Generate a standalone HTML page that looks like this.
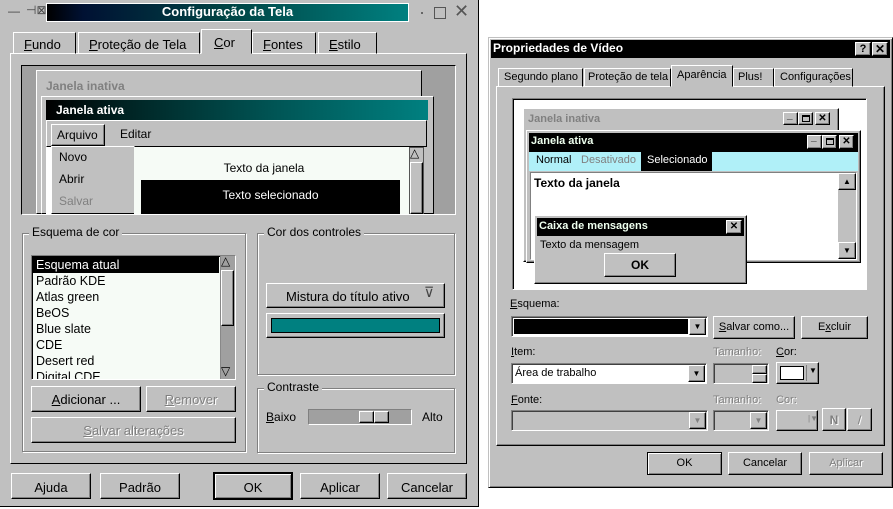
<!DOCTYPE html><html><head><meta charset="utf-8"><style>
*{box-sizing:border-box;margin:0;padding:0}
body{width:893px;height:509px;background:#fff;position:relative;overflow:hidden;font-family:"Liberation Sans",sans-serif;font-size:12px;color:#000}
div,span{position:absolute}
.r{background:#c0c0c0;border:1px solid;border-color:#fff #000 #000 #fff;box-shadow:inset -1px -1px #808080}
.s{border:1px solid;border-color:#808080 #fff #fff #808080;box-shadow:inset 1px 1px #404040}
.g{border:1px solid #808080;box-shadow:1px 1px #fff,inset 1px 1px #fff}
.t{white-space:nowrap}
.c{text-align:center}
.gl{background:#c0c0c0;padding:0 3px;white-space:nowrap}
.dis{color:#808080;text-shadow:1px 1px #fff}
.w{font-size:11px}
</style></head><body>
<!-- LEFT DIALOG -->
<div style="left:0;top:0;width:479px;height:507px;background:#c0c0c0;border-right:1px solid #000;border-bottom:1px solid #000"></div>
<div class="t" style="left:8px;top:4px;font-size:12px;color:#444">—</div>
<div class="t" style="left:26px;top:3px;font-size:12px;color:#444">⊣⊠</div>
<div style="left:46px;top:3px;width:363px;height:19px;background:linear-gradient(90deg,#000 0%,#013 10%,#044 50%,#008080 100%);border:1px solid #fff"></div>
<div class="t c" style="left:46px;top:4px;width:363px;color:#fff;font-weight:bold;font-size:13px">Configuração da Tela</div>
<div style="left:421px;top:12px;width:2px;height:2px;background:#666"></div>
<div style="left:434px;top:7px;width:12px;height:12px;border:1px solid #555"></div>
<div class="t" style="left:454px;top:1px;font-size:18px;color:#555">✕</div>
<!-- tabs -->
<div style="left:10px;top:53px;width:457px;height:411px;border:1px solid;border-color:#fff #000 #000 #fff"></div>
<div class="t" style="left:13px;top:32px;width:63px;height:22px;border:1px solid;border-color:#fff #000 transparent #fff;padding:4px 0 0 10px;font-size:13px"><u>F</u>undo</div>
<div class="t" style="left:78px;top:32px;width:122px;height:22px;border:1px solid;border-color:#fff #000 transparent #fff;padding:4px 0 0 10px;font-size:13px"><u>P</u>roteção de Tela</div>
<div class="t" style="left:201px;top:29px;width:51px;height:25px;border:1px solid;border-color:#fff #000 transparent #fff;background:#c0c0c0;padding:5px 0 0 12px;font-size:13px"><u>C</u>or</div>
<div class="t" style="left:252px;top:32px;width:64px;height:22px;border:1px solid;border-color:#fff #000 transparent #fff;padding:4px 0 0 10px;font-size:13px"><u>F</u>ontes</div>
<div class="t" style="left:318px;top:32px;width:59px;height:22px;border:1px solid;border-color:#fff #000 transparent #fff;padding:4px 0 0 10px;font-size:13px"><u>E</u>stilo</div>
<!-- preview -->
<div style="left:21px;top:65px;width:435px;height:150px;background:#a0a0a0;border:1px solid;border-color:#000 #fff #fff #000"></div>
<div style="left:36px;top:70px;width:386px;height:144px;background:#c0c0c0;border:1px solid;border-color:#fff #000 #000 #fff"></div>
<div class="t" style="left:46px;top:79px;color:#808080;font-weight:bold;font-size:12px">Janela inativa</div>
<div style="left:41px;top:96px;width:393px;height:118px;background:#c0c0c0;border:1px solid;border-color:#fff #000 #000 #fff"></div>
<div style="left:46px;top:100px;width:382px;height:20px;background:linear-gradient(90deg,#000 0%,#022 20%,#055 60%,#008080 100%)"></div>
<div class="t" style="left:56px;top:103px;color:#fff;font-weight:bold;font-size:12px">Janela ativa</div>
<div style="left:46px;top:120px;width:381px;height:27px;border:1px solid;border-color:#fff #000 #000 #fff"></div>
<div class="r t" style="left:51px;top:124px;width:54px;height:22px;padding:3px 0 0 5px;font-size:12px">Arquivo</div>
<div class="t" style="left:120px;top:127px;font-size:12px">Editar</div>
<div style="left:46px;top:147px;width:7px;height:67px;background:#fff"></div>
<div style="left:51px;top:146px;width:84px;height:68px;background:#c0c0c0;border:1px solid;border-color:#fff #000 #000 #fff"></div>
<div class="t" style="left:59px;top:150px">Novo</div>
<div class="t" style="left:59px;top:172px">Abrir</div>
<div class="t" style="left:59px;top:194px;color:#808080">Salvar</div>
<div style="left:134px;top:147px;width:275px;height:67px;background:#f6fbf6"></div>
<div class="t c" style="left:134px;top:161px;width:260px">Texto da janela</div>
<div style="left:141px;top:180px;width:259px;height:34px;background:#000"></div>
<div class="t c" style="left:141px;top:188px;width:259px;color:#fff">Texto selecionado</div>
<div style="left:409px;top:147px;width:15px;height:67px;background:#c0c0c0;border:1px solid #555"></div>
<div class="t" style="left:410px;top:146px;font-size:12px">△</div>
<div class="r" style="left:410px;top:162px;width:13px;height:52px"></div>
<!-- Esquema group -->
<div class="g" style="left:22px;top:233px;width:224px;height:219px"></div>
<div class="gl" style="left:29px;top:225px;font-size:12px">Esquema de cor</div>
<div style="left:31px;top:255px;width:205px;height:125px;background:#f6fbf6;border:1px solid;border-color:#808080 #fff #fff #808080;box-shadow:inset 1px 1px #000"></div>
<div style="left:33px;top:257px;width:186px;height:16px;background:#000"></div>
<div style="left:36px;top:257px;line-height:16px;font-size:12.5px;width:185px;height:122px;overflow:hidden"><span style="position:static;color:#fff">Esquema atual</span><br>Padrão KDE<br>Atlas green<br>BeOS<br>Blue slate<br>CDE<br>Desert red<br>Digital CDE</div>
<div style="left:220px;top:256px;width:15px;height:123px;background:#a0a0a0;border-left:1px solid #888"></div>
<div class="t" style="left:221px;top:254px">△</div>
<div class="r" style="left:221px;top:270px;width:13px;height:56px"></div>
<div class="t" style="left:221px;top:364px">▽</div>
<div class="r c" style="left:31px;top:386px;width:110px;height:26px;padding-top:5px;font-size:13px"><u>A</u>dicionar ...</div>
<div class="r c dis" style="left:146px;top:386px;width:90px;height:26px;padding-top:5px;font-size:13px"><u>R</u>emover</div>
<div class="r c dis" style="left:31px;top:417px;width:205px;height:26px;padding-top:5px;font-size:13px"><u>S</u>alvar alterações</div>
<!-- Cor dos controles -->
<div class="g" style="left:257px;top:233px;width:198px;height:142px"></div>
<div class="gl" style="left:264px;top:225px;font-size:12px">Cor dos controles</div>
<div class="r" style="left:266px;top:283px;width:179px;height:25px;padding:5px 0 0 19px;font-size:13px" class="t">Mistura do título ativo</div>
<div class="t" style="left:424px;top:284px;font-size:14px;color:#444">⊽</div>
<div class="r" style="left:266px;top:313px;width:179px;height:25px"></div>
<div style="left:271px;top:318px;width:169px;height:15px;background:#008080;border:1px solid #000"></div>
<div class="g" style="left:257px;top:388px;width:198px;height:65px"></div>
<div class="gl" style="left:264px;top:380px;font-size:12px">Contraste</div>
<div class="t" style="left:266px;top:410px;font-size:12px"><u>B</u>aixo</div>
<div class="t" style="left:422px;top:410px;font-size:12px">Alto</div>
<div style="left:308px;top:409px;width:104px;height:16px;background:#a0a0a0;border:1px solid;border-color:#808080 #fff #fff #808080"></div>
<div class="r" style="left:359px;top:411px;width:15px;height:12px"></div>
<div class="r" style="left:374px;top:411px;width:15px;height:12px"></div>
<!-- bottom buttons -->
<div class="r c" style="left:11px;top:473px;width:80px;height:26px;padding-top:6px;font-size:13px">Ajuda</div>
<div class="r c" style="left:100px;top:473px;width:80px;height:26px;padding-top:6px;font-size:13px">Padrão</div>
<div class="c" style="left:213px;top:472px;width:80px;height:28px;border:2px solid #000;padding-top:6px;font-size:13px;box-shadow:inset 1px 1px #fff,inset -1px -1px #808080">OK</div>
<div class="r c" style="left:300px;top:473px;width:80px;height:26px;padding-top:6px;font-size:13px">Aplicar</div>
<div class="r c" style="left:387px;top:473px;width:80px;height:26px;padding-top:6px;font-size:13px">Cancelar</div>

<!-- RIGHT DIALOG -->
<div style="left:488px;top:37px;width:405px;height:451px;background:#c0c0c0;border:1px solid;border-color:#c0c0c0 #000 #000 #c0c0c0;box-shadow:inset 1px 1px #fff,inset -1px -1px #808080"></div>
<div style="left:491px;top:40px;width:399px;height:18px;background:#000"></div>
<div class="t" style="left:493px;top:41px;color:#fff;font-weight:bold;font-size:12px">Propriedades de Vídeo</div>
<div class="r c" style="left:855px;top:42px;width:16px;height:14px;font-size:11px;font-weight:bold;line-height:12px">?</div>
<div class="r c" style="left:872px;top:42px;width:16px;height:14px;font-size:12px;font-weight:bold;line-height:12px">✕</div>
<div style="left:496px;top:86px;width:389px;height:360px;border:1px solid;border-color:#fff #000 #000 #fff;box-shadow:inset -1px -1px #808080"></div>
<div class="t w" style="left:498px;top:68px;width:85px;height:19px;border:1px solid;border-color:#fff #000 transparent #fff;padding:2px 0 0 5px">Segundo plano</div>
<div class="t w" style="left:584px;top:68px;width:87px;height:19px;border:1px solid;border-color:#fff #000 transparent #fff;padding:2px 0 0 3px">Proteção de tela</div>
<div class="t w" style="left:671px;top:65px;width:62px;height:22px;border:1px solid;border-color:#fff #000 transparent #fff;background:#c0c0c0;padding:3px 0 0 5px">Aparência</div>
<div class="t w" style="left:733px;top:68px;width:41px;height:19px;border:1px solid;border-color:#fff #000 transparent #fff;padding:2px 0 0 4px">Plus!</div>
<div class="t w" style="left:774px;top:68px;width:79px;height:19px;border:1px solid;border-color:#fff #000 transparent #fff;padding:2px 0 0 5px">Configurações</div>
<div style="left:512px;top:98px;width:355px;height:192px;background:#fff;border:1px solid;border-color:#808080 #fff #fff #808080;box-shadow:inset 1px 1px #000"></div>
<div class="r" style="left:523px;top:108px;width:316px;height:154px"></div>
<div class="t w" style="left:528px;top:113px;color:#808080;font-weight:bold">Janela inativa</div>
<div class="r" style="left:783px;top:112px;width:15px;height:13px"></div><div class="t" style="left:787px;top:110px;font-size:10px;font-weight:bold">_</div>
<div class="r" style="left:798px;top:112px;width:15px;height:13px"></div><div style="left:802px;top:115px;width:8px;height:7px;border:1px solid #000;border-top-width:2px"></div>
<div class="r c" style="left:815px;top:112px;width:15px;height:13px;font-size:10px;line-height:11px;font-weight:bold">✕</div>
<div class="r" style="left:526px;top:130px;width:335px;height:133px"></div>
<div style="left:529px;top:133px;width:329px;height:19px;background:#000"></div>
<div class="t w" style="left:531px;top:135px;color:#efe;font-weight:bold">Janela ativa</div>
<div class="r" style="left:807px;top:135px;width:15px;height:14px"></div><div class="t" style="left:811px;top:132px;font-size:10px;font-weight:bold">_</div>
<div class="r" style="left:822px;top:135px;width:15px;height:14px"></div><div style="left:826px;top:138px;width:8px;height:7px;border:1px solid #000;border-top-width:2px"></div>
<div class="r c" style="left:839px;top:135px;width:15px;height:14px;font-size:10px;line-height:12px;font-weight:bold">✕</div>
<div style="left:529px;top:152px;width:329px;height:19px;background:#b0f0f8"></div>
<div class="t w" style="left:536px;top:154px">Normal</div>
<div class="t w" style="left:581px;top:154px;color:#808080">Desativado</div>
<div style="left:641px;top:152px;width:71px;height:19px;background:#000"></div>
<div class="t w" style="left:647px;top:154px;color:#fff">Selecionado</div>
<div style="left:530px;top:172px;width:327px;height:88px;background:#fff;border:1px solid;border-color:#808080 #fff #fff #808080"></div>
<div class="t" style="left:534px;top:176px;font-weight:bold;font-size:12px">Texto da janela</div>
<div style="left:838px;top:173px;width:18px;height:86px;background:#c0c0c0"></div>
<div class="r c" style="left:838px;top:173px;width:18px;height:17px;font-size:8px;line-height:15px">▲</div>
<div class="r c" style="left:838px;top:242px;width:18px;height:17px;font-size:8px;line-height:15px">▼</div>
<div class="r" style="left:534px;top:215px;width:213px;height:69px"></div>
<div style="left:537px;top:218px;width:207px;height:18px;background:#000"></div>
<div class="t w" style="left:539px;top:220px;color:#efe;font-weight:bold">Caixa de mensagens</div>
<div class="r c" style="left:726px;top:220px;width:16px;height:14px;font-size:10px;line-height:12px;font-weight:bold">✕</div>
<div class="t w" style="left:540px;top:239px">Texto da mensagem</div>
<div class="r c" style="left:604px;top:253px;width:72px;height:24px;font-weight:bold;font-size:12px;padding-top:4px">OK</div>
<!-- controls -->
<div class="t w" style="left:510px;top:298px"><u>E</u>squema:</div>
<div class="s" style="left:511px;top:316px;width:197px;height:21px;background:#fff"></div>
<div style="left:514px;top:319px;width:174px;height:15px;background:#000;outline:1px dotted #fff"></div>
<div class="r c" style="left:689px;top:318px;width:17px;height:17px;font-size:8px;line-height:15px">▼</div>
<div class="r c w" style="left:713px;top:316px;width:82px;height:23px;padding-top:4px;border-color:#fff #000 #000 #fff"><u>S</u>alvar como...</div>
<div class="r c w" style="left:801px;top:316px;width:67px;height:23px;padding-top:4px">E<u>x</u>cluir</div>
<div class="t w" style="left:511px;top:346px"><u>I</u>tem:</div>
<div class="t w dis" style="left:713px;top:346px">Tamanho:</div>
<div class="t w" style="left:776px;top:346px"><u>C</u>or:</div>
<div class="s w" style="left:511px;top:363px;width:196px;height:21px;background:#fff;padding:3px 0 0 3px" >Área de trabalho</div>
<div class="r c" style="left:688px;top:365px;width:17px;height:17px;font-size:8px;line-height:15px">▼</div>
<div class="s" style="left:713px;top:363px;width:56px;height:21px"></div>
<div class="r" style="left:752px;top:365px;width:15px;height:9px"></div>
<div class="r" style="left:752px;top:374px;width:15px;height:9px"></div>
<div class="r" style="left:776px;top:362px;width:43px;height:22px"></div>
<div style="left:780px;top:366px;width:24px;height:14px;background:#fff;border:1px solid #000"></div>
<div style="left:806px;top:365px;width:1px;height:16px;background:#808080"></div>
<div class="t" style="left:809px;top:366px;font-size:8px">▼</div>
<div class="t w" style="left:511px;top:394px"><u>F</u>onte:</div>
<div class="t w dis" style="left:713px;top:394px">Tamanho:</div>
<div class="t w dis" style="left:776px;top:394px">Cor:</div>
<div class="s" style="left:511px;top:410px;width:197px;height:21px"></div>
<div class="r c" style="left:689px;top:412px;width:17px;height:17px;font-size:8px;line-height:15px;color:#808080">▼</div>
<div class="s" style="left:713px;top:410px;width:56px;height:21px"></div>
<div class="r c" style="left:750px;top:412px;width:17px;height:17px;font-size:8px;line-height:15px;color:#808080">▼</div>
<div class="r" style="left:776px;top:410px;width:42px;height:21px"></div>
<div class="t" style="left:808px;top:414px;font-size:8px;color:#808080">|▼</div>
<div class="r c dis" style="left:822px;top:408px;width:24px;height:23px;font-weight:bold;padding-top:4px">N</div>
<div class="r c dis" style="left:847px;top:408px;width:25px;height:23px;padding-top:4px">/</div>
<div class="c w" style="left:647px;top:452px;width:75px;height:23px;border:1px solid #000;box-shadow:inset 1px 1px #fff,inset -1px -1px #808080;padding-top:4px">OK</div>
<div class="r c w" style="left:728px;top:452px;width:74px;height:23px;padding-top:4px">Cancelar</div>
<div class="r c w dis" style="left:809px;top:452px;width:74px;height:23px;padding-top:4px">Aplicar</div>
</body></html>
